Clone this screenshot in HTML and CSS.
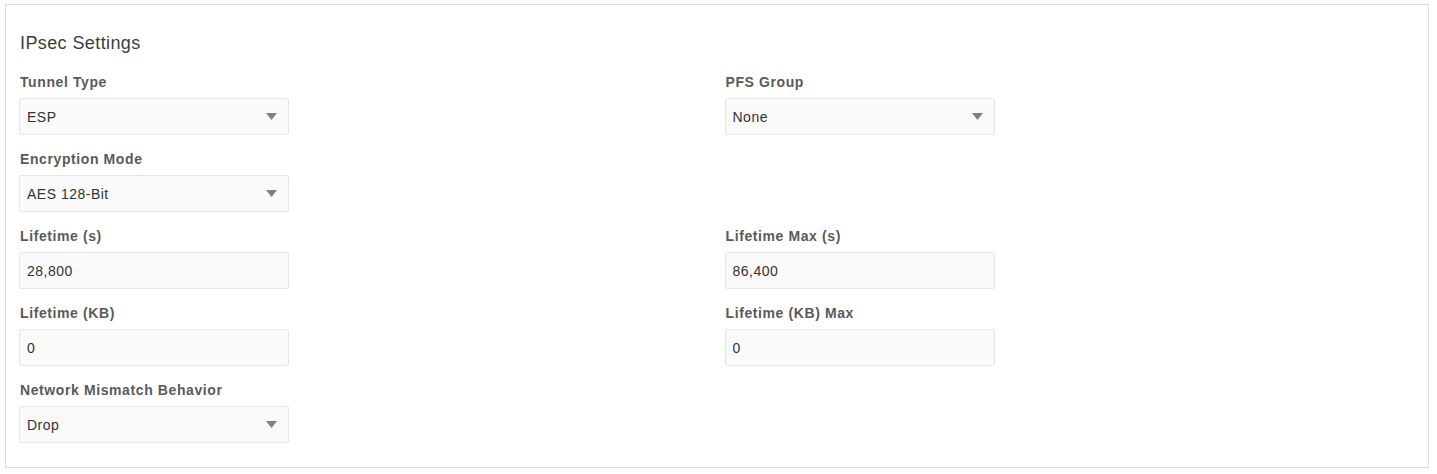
FILE: index.html
```html
<!DOCTYPE html>
<html lang="en">
<head>
<meta charset="utf-8">
<title>IPsec Settings</title>
<link rel="stylesheet" href="styles.css">
</head>
<body>
<section class="card">
  <h2 class="card-title">IPsec Settings</h2>
  <div class="form-grid">
    <div class="field">
      <label class="field-label">Tunnel Type</label>
      <div class="select-wrap">
        <select class="control"><option>ESP</option></select>
        <svg class="caret" width="11" height="7" viewBox="0 0 11 7"><path d="M0 0H11L5.5 7Z" fill="#808080"/></svg>
      </div>
    </div>
    <div class="field">
      <label class="field-label">PFS Group</label>
      <div class="select-wrap">
        <select class="control"><option>None</option></select>
        <svg class="caret" width="11" height="7" viewBox="0 0 11 7"><path d="M0 0H11L5.5 7Z" fill="#808080"/></svg>
      </div>
    </div>

    <div class="field">
      <label class="field-label">Encryption Mode</label>
      <div class="select-wrap">
        <select class="control"><option>AES 128-Bit</option></select>
        <svg class="caret" width="11" height="7" viewBox="0 0 11 7"><path d="M0 0H11L5.5 7Z" fill="#808080"/></svg>
      </div>
    </div>
    <div class="field empty"></div>

    <div class="field">
      <label class="field-label">Lifetime (s)</label>
      <input class="control" type="text" value="28,800">
    </div>
    <div class="field">
      <label class="field-label">Lifetime Max (s)</label>
      <input class="control" type="text" value="86,400">
    </div>

    <div class="field">
      <label class="field-label">Lifetime (KB)</label>
      <input class="control" type="text" value="0">
    </div>
    <div class="field">
      <label class="field-label">Lifetime (KB) Max</label>
      <input class="control" type="text" value="0">
    </div>

    <div class="field">
      <label class="field-label">Network Mismatch Behavior</label>
      <div class="select-wrap">
        <select class="control"><option>Drop</option></select>
        <svg class="caret" width="11" height="7" viewBox="0 0 11 7"><path d="M0 0H11L5.5 7Z" fill="#808080"/></svg>
      </div>
    </div>
    <div class="field empty"></div>
  </div>
</section>
</body>
</html>
```

FILE: styles.css
```css
* {
  box-sizing: border-box;
}

html, body {
  margin: 0;
  padding: 0;
  background: #ffffff;
}

body {
  font-family: "Liberation Sans", Arial, sans-serif;
  color: #333333;
}

.card {
  margin: 4px 8px 5px 5px;
  border: 1px solid #dddddd;
  background: #ffffff;
  padding: 27px 13px 24px 13px;
}

.card-title {
  margin: 0 0 19px 1px;
  font-size: 18px;
  line-height: 22px;
  font-weight: normal;
  letter-spacing: 0.4px;
  color: #3d3d3d;
}

.form-grid {
  display: grid;
  grid-template-columns: 1fr 1fr;
  column-gap: 15px;
  row-gap: 15px;
}

.field {
  display: flex;
  flex-direction: column;
  align-items: flex-start;
}

.field.empty {
  min-height: 1px;
}

.field-label {
  display: block;
  font-size: 14px;
  line-height: 18px;
  font-weight: bold;
  letter-spacing: 0.6px;
  color: #5a5a5a;
  margin: 0 0 7px 1px;
}

.select-wrap {
  position: relative;
  width: 270px;
  height: 37px;
}

.control {
  display: block;
  width: 270px;
  height: 37px;
  margin: 0;
  padding: 0 28px 0 7px;
  border: 1px solid #e6e6e6;
  border-radius: 2px;
  background: #fafafa;
  font-family: "Liberation Sans", Arial, sans-serif;
  font-size: 14px;
  letter-spacing: 0.5px;
  color: #333333;
  outline: none;
  -webkit-appearance: none;
  appearance: none;
}

.caret {
  position: absolute;
  right: 12px;
  top: 15px;
  pointer-events: none;
}
```
